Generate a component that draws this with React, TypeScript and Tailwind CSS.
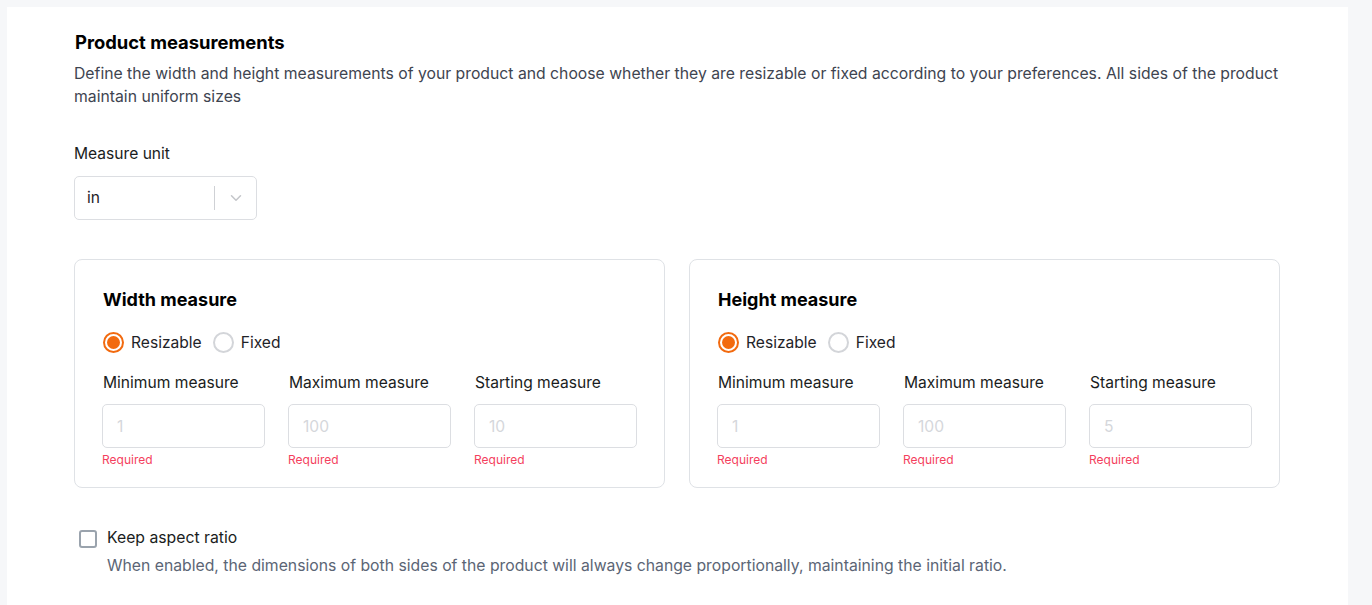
import { ChevronDown } from "lucide-react";

type Field = { label: string; placeholder: string };

function Radio({ checked, label }: { checked?: boolean; label: string }) {
  return (
    <label className="flex items-center gap-[7px] text-[15.6px] text-[#1f2328]">
      {checked ? (
        <span className="flex h-[21px] w-[21px] items-center justify-center rounded-full border-2 border-[#f26a0f]">
          <span className="h-[13px] w-[13px] rounded-full bg-[#f26a0f]" />
        </span>
      ) : (
        <span className="h-[21px] w-[21px] rounded-full border-2 border-[#d3d5d9]" />
      )}
      {label}
    </label>
  );
}

function MeasureCard({ title, fields }: { title: string; fields: Field[] }) {
  return (
    <div className="flex-1 rounded-lg border border-[#dfe2e6] px-[27px] pt-[28px] pb-[19px]">
      <h3 className="pl-px text-[18px] leading-6 font-bold text-black">{title}</h3>
      <div className="mt-[19px] flex items-center gap-[11px] pl-px">
        <Radio checked label="Resizable" />
        <Radio label="Fixed" />
      </div>
      <div className="mt-[18px] grid grid-cols-3 gap-x-[23px]">
        {fields.map((f) => (
          <div key={f.label} className="flex flex-col">
            <span className="pl-px text-[15.6px] leading-[22px] text-[#1a1d21]">{f.label}</span>
            <input
              placeholder={f.placeholder}
              className="mt-[10px] h-[44px] w-full rounded-[5px] border border-[#dcdee2] px-[14px] text-[15.6px] placeholder:text-[#d5d7db] outline-none"
            />
            <span className="mt-[4px] text-[12px] leading-4 text-[#f43f5e]">Required</span>
          </div>
        ))}
      </div>
    </div>
  );
}

export default function App() {
  return (
    <div
      className="min-h-[605px] bg-[#f6f7f9] pt-[7px] pl-[7px] pr-[24px]"
      style={{ fontFamily: "Inter, 'Noto Sans', sans-serif" }}
    >
      <div className="min-h-[598px] w-[1341px] bg-white pl-[67px] pt-[23px]">
        <div className="w-[1206px]">
          <h2 className="pl-px text-[18.4px] leading-6 font-bold text-black">Product measurements</h2>
          <p className="mt-[8px] text-[15.75px] leading-[23px] text-[#3e4450]">
            Define the width and height measurements of your product and choose whether they are resizable or fixed according to your preferences. All sides of the product maintain uniform sizes
          </p>

          <div className="mt-[35px] text-[15.6px] leading-[22px] text-[#1a1d21]">Measure unit</div>
          <div className="mt-[11px] flex h-[44px] w-[183px] items-center rounded-[5px] border border-[#dcdee2]">
            <span className="flex-1 pl-[12px] text-[15.6px] text-[#1f2328]">in</span>
            <span className="h-[24px] w-px bg-[#cfd1d5]" />
            <span className="flex w-[41px] items-center justify-center text-[#c4c6ca]">
              <ChevronDown size={18} strokeWidth={2} />
            </span>
          </div>

          <div className="mt-[39px] flex gap-[24px]">
            <MeasureCard
              title="Width measure"
              fields={[
                { label: "Minimum measure", placeholder: "1" },
                { label: "Maximum measure", placeholder: "100" },
                { label: "Starting measure", placeholder: "10" },
              ]}
            />
            <MeasureCard
              title="Height measure"
              fields={[
                { label: "Minimum measure", placeholder: "1" },
                { label: "Maximum measure", placeholder: "100" },
                { label: "Starting measure", placeholder: "5" },
              ]}
            />
          </div>

          <div className="mt-[39px] flex gap-[10px] pl-[5px]">
            <span className="mt-[3px] h-[18px] w-[18px] shrink-0 rounded-[3px] border-2 border-[#9aa3ad]" />
            <div>
              <div className="text-[15.75px] leading-[22px] text-[#1a1d21]">Keep aspect ratio</div>
              <div className="mt-[6px] text-[15.75px] leading-[22px] text-[#5b6575]">
                When enabled, the dimensions of both sides of the product will always change proportionally, maintaining the initial ratio.
              </div>
            </div>
          </div>
        </div>
      </div>
    </div>
  );
}
